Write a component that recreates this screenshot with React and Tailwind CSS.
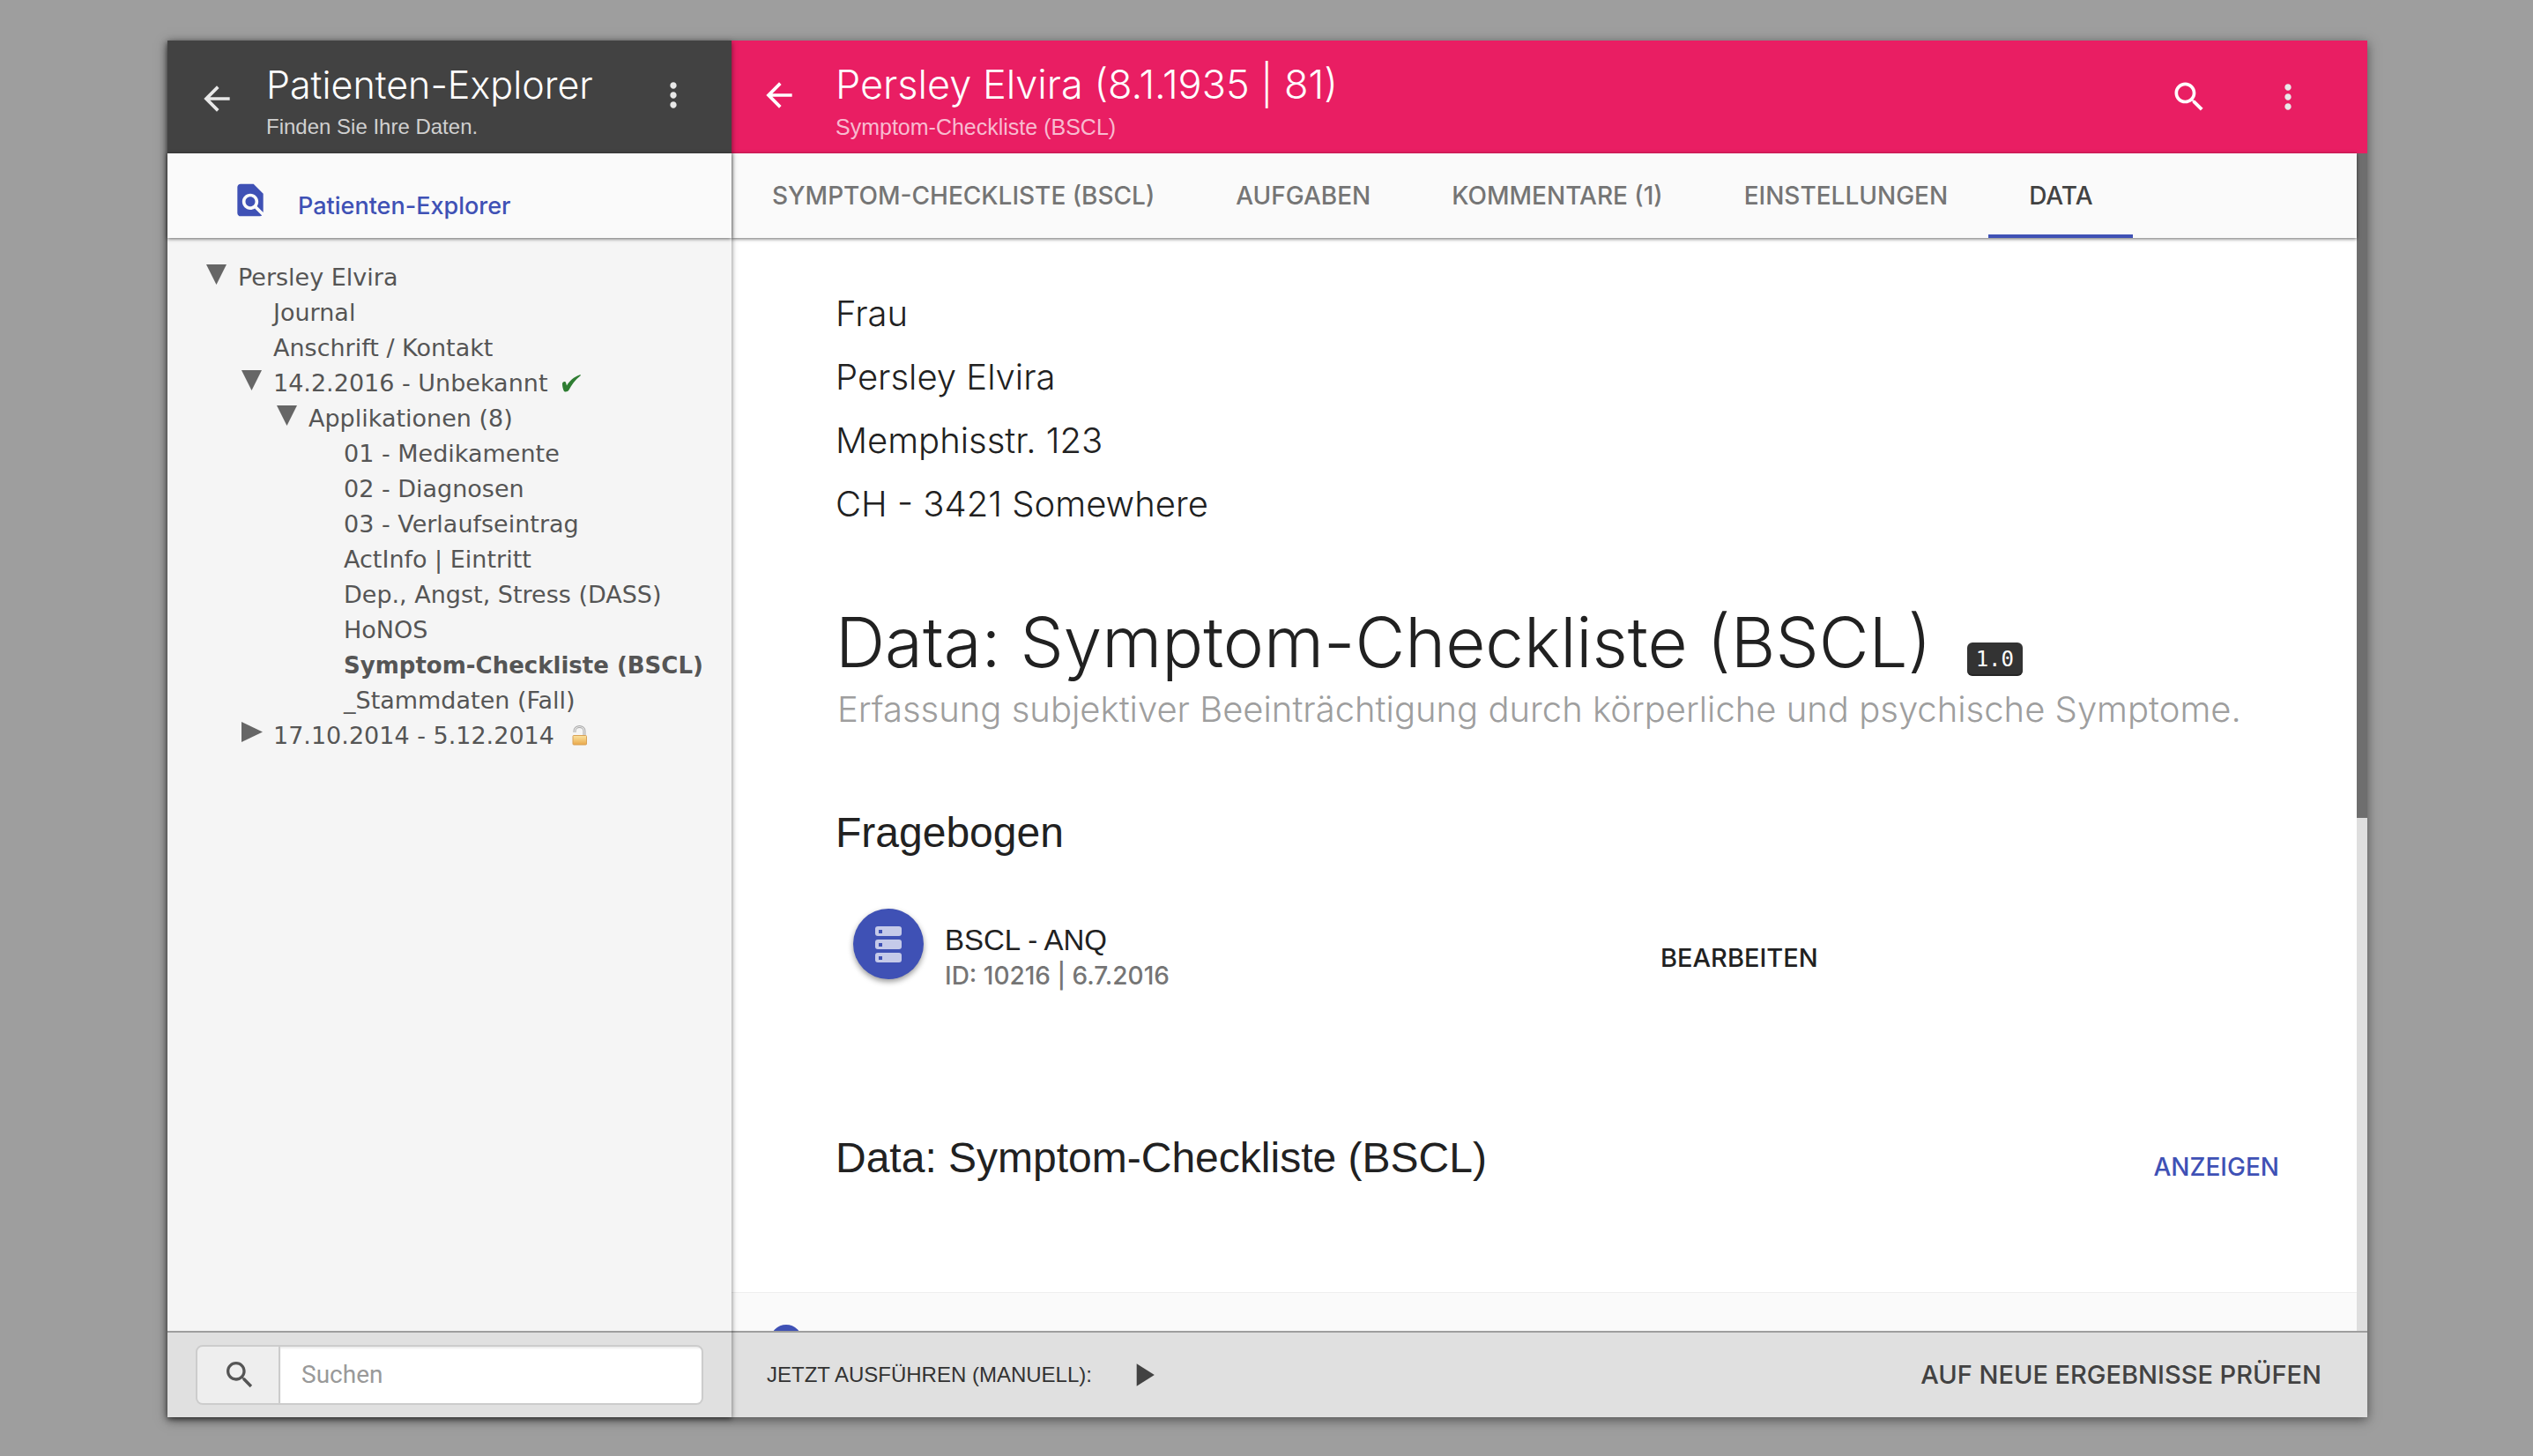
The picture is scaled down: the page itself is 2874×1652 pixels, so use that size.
const PATHS = {
  back: "M20 11H7.83l5.59-5.59L12 4l-8 8 8 8 1.41-1.41L7.83 13H20v-2z",
  more: "M12 8c1.1 0 2-.9 2-2s-.9-2-2-2-2 .9-2 2 .9 2 2 2zm0 2c-1.1 0-2 .9-2 2s.9 2 2 2 2-.9 2-2-.9-2-2-2zm0 6c-1.1 0-2 .9-2 2s.9 2 2 2 2-.9 2-2-.9-2-2-2z",
  search:
    "M15.5 14h-.79l-.28-.27C15.41 12.59 16 11.11 16 9.5 16 5.91 13.09 3 9.5 3S3 5.91 3 9.5 5.91 16 9.5 16c1.61 0 3.09-.59 4.23-1.57l.27.28v.79l5 4.99L20.49 19l-4.99-5zm-6 0C7.01 14 5 11.99 5 9.5S7.01 5 9.5 5 14 7.01 14 9.5 11.99 14 9.5 14z",
  findInPage:
    "M20 19.59V8l-6-6H6c-1.1 0-1.99.9-1.99 2L4 20c0 1.1.89 2 1.99 2H18c.45 0 .85-.15 1.19-.4l-4.43-4.43c-.8.52-1.74.83-2.76.83-2.76 0-5-2.24-5-5s2.24-5 5-5 5 2.24 5 5c0 1.02-.31 1.96-.83 2.75L20 19.59zM9 13c0 1.66 1.34 3 3 3s3-1.34 3-3-1.34-3-3-3-3 1.34-3 3z",
  play: "M8 5v14l11-7z",
};

function Icon({ name, className = "size-11" }) {
  return (
    <svg viewBox="0 0 24 24" fill="currentColor" className={className} aria-hidden="true">
      <path d={PATHS[name]} />
    </svg>
  );
}

function StorageIcon() {
  return (
    <svg viewBox="0 0 30 41" className="h-[41px] w-[30px]" fill="#c5cae9" aria-hidden="true">
      {[0, 15, 30].map((y) => (
        <g key={y}>
          <rect x="0" y={y} width="30" height="11" rx="3" />
          <rect x="4" y={y + 4} width="4" height="4" fill="#3f51b5" />
        </g>
      ))}
    </svg>
  );
}

function CheckMark() {
  return (
    <svg viewBox="0 0 22 20" className="h-5 w-[22px]" fill="#2e7d32" role="img" aria-label="abgeschlossen">
      <path d="M1 10.5C1 8 4.500 7 5.200 9.500L6 12.500C9 7.500 14 2.500 21 0.300C21.800 0 22.200 0.600 21.600 1.200C15.500 6 11.500 11.500 8.500 17.500C7.500 19.500 3.500 20.500 2.500 18C1.700 16 1 13 1 10.500Z" />
    </svg>
  );
}

function LockOpen() {
  return (
    <svg viewBox="0 0 18 23" className="h-[23px] w-[18px]" role="img" aria-label="offen">
      <defs>
        <linearGradient id="brass" x1="0" y1="0" x2="0" y2="1">
          <stop offset="0" stopColor="#fbe3a0" />
          <stop offset="1" stopColor="#e9a84a" />
        </linearGradient>
      </defs>
      <path d="M3 8V6.500A5.500 5 0 0 1 14 6.500V12" fill="none" stroke="#a9a9a9" strokeWidth="3" />
      <path d="M3 8V6.500A5.500 5 0 0 1 14 6.500V12" fill="none" stroke="#e6e6e6" strokeWidth="1.200" />
      <rect x="1" y="11.500" width="15.500" height="10.500" rx="1" fill="url(#brass)" stroke="#d9a257" />
    </svg>
  );
}

const TREE = [
  {
    label: "Persley Elvira",
    open: true,
    children: [
      { label: "Journal" },
      { label: "Anschrift / Kontakt" },
      {
        label: "14.2.2016 - Unbekannt",
        open: true,
        mark: "check",
        children: [
          {
            label: "Applikationen (8)",
            open: true,
            children: [
              { label: "01 - Medikamente" },
              { label: "02 - Diagnosen" },
              { label: "03 - Verlaufseintrag" },
              { label: "ActInfo | Eintritt" },
              { label: "Dep., Angst, Stress (DASS)" },
              { label: "HoNOS" },
              { label: "Symptom-Checkliste (BSCL)", active: true },
              { label: "_Stammdaten (Fall)" },
            ],
          },
        ],
      },
      { label: "17.10.2014 - 5.12.2014", open: false, mark: "lock", children: [] },
    ],
  },
];

function TreeNode({ node }) {
  return (
    <li>
      <div className="flex h-10 items-start">
        {node.children ? (
          <button type="button" aria-expanded={node.open} aria-label={node.label} className="mt-1 size-6 shrink-0">
            <svg viewBox="0 0 24 24" className="size-6" fill="#666" aria-hidden="true">
              <path d={node.open ? "M0 1H23L11.500 24Z" : "M0 0V23L24 11.500Z"} />
            </svg>
          </button>
        ) : (
          <span className="w-6 shrink-0" />
        )}
        <a
          href="#"
          aria-current={node.active ? "page" : undefined}
          className={
            node.active
              ? "ml-3 text-[26px] leading-10 font-bold whitespace-nowrap"
              : "ml-3 text-[27px] leading-10 whitespace-nowrap"
          }
        >
          {node.label}
        </a>
        {node.mark === "check" && (
          <span className="mt-[10px] ml-4">
            <CheckMark />
          </span>
        )}
        {node.mark === "lock" && (
          <span className="mt-2 ml-5">
            <LockOpen />
          </span>
        )}
      </div>
      {node.children?.length > 0 && (
        <ul className="pl-10">
          {node.children.map((c) => (
            <TreeNode key={c.label} node={c} />
          ))}
        </ul>
      )}
    </li>
  );
}

function Sidebar() {
  return (
    <aside className="relative z-10 flex w-[640px] shrink-0 flex-col bg-[#f5f5f5] shadow-[0_2px_6px_rgba(0,0,0,0.55)]">
      <header className="flex h-32 shrink-0 items-start bg-[#424242] pr-11 pl-[34px] text-white">
        <button type="button" aria-label="Zurück" className="mt-11 text-[#e8e8e8]">
          <Icon name="back" />
        </button>
        <div className="mt-[26px] ml-[34px] flex-1 whitespace-nowrap">
          <h1 className="font-['Inter',sans-serif] text-[43px] leading-12 font-light">Patienten-Explorer</h1>
          <p className="text-[24px] leading-12 text-[#d0d0d0]">Finden Sie Ihre Daten.</p>
        </div>
        <button type="button" aria-label="Mehr" className="mt-10 text-[#e8e8e8]">
          <Icon name="more" />
        </button>
      </header>

      <a
        href="#"
        className="relative flex h-24 shrink-0 items-start bg-[#fafafa] pl-[72px] text-[#3f51b5] shadow-[0_1px_4px_rgba(0,0,0,0.6)]"
      >
        <Icon name="findInPage" className="mt-[31px] size-11" />
        <span className="mt-9 ml-8 font-['Inter',sans-serif] text-[27px] leading-12 font-medium">
          Patienten-Explorer
        </span>
      </a>

      <nav
        aria-label="Patient"
        className="min-h-0 flex-1 overflow-hidden pt-[25px] pl-11 font-['DejaVu_Sans',sans-serif] text-[#555]"
      >
        <ul>
          {TREE.map((n) => (
            <TreeNode key={n.label} node={n} />
          ))}
        </ul>
      </nav>

      <form className="shrink-0 border-t-2 border-[#9e9e9e] bg-[#e0e0e0] px-8 py-[14px]">
        <div className="flex h-[68px] overflow-hidden rounded-lg border-2 border-[#ccc]">
          <label
            htmlFor="suche"
            aria-label="Suchen"
            className="flex w-[94px] items-center justify-center border-r-2 border-[#ccc] bg-[#eee] pl-1 text-[#555]"
          >
            <Icon name="search" className="size-10" />
          </label>
          <input
            id="suche"
            type="search"
            placeholder="Suchen"
            className="min-w-0 flex-1 bg-white px-6 font-['Roboto',sans-serif] text-[28px] shadow-[inset_0_2px_2px_rgba(0,0,0,0.08)] outline-none placeholder:text-[#999]"
          />
        </div>
      </form>
    </aside>
  );
}

const TABS = ["SYMPTOM-CHECKLISTE (BSCL)", "AUFGABEN", "KOMMENTARE (1)", "EINSTELLUNGEN", "DATA"];

function Tabs() {
  return (
    <div
      role="tablist"
      className="relative flex h-24 shrink-0 bg-[#fafafa] font-['Inter',sans-serif] text-[28px] font-medium shadow-[0_1px_4px_rgba(0,0,0,0.6)]"
    >
      {TABS.map((t) => (
        <button
          key={t}
          type="button"
          role="tab"
          aria-selected={t === "DATA"}
          className={
            t === "DATA"
              ? "border-y-4 border-t-transparent border-b-[#3f51b5] px-[46px] text-[#424242]"
              : "border-y-4 border-transparent px-[46px] text-[#757575]"
          }
        >
          {t}
        </button>
      ))}
    </div>
  );
}

function Content() {
  return (
    <main className="flex min-h-0 flex-1 flex-col overflow-hidden bg-white pt-[50px] text-[#212121]">
      <div className="pr-[88px] pl-[118px]">
        <address className="font-['Inter',sans-serif] text-[40px] leading-[72px] font-light not-italic">
          <p>Frau</p>
          <p>Persley Elvira</p>
          <p>Memphisstr. 123</p>
          <p>CH - 3421 Somewhere</p>
        </address>

        <div className="mt-[77px] flex items-start whitespace-nowrap">
          <h2 className="font-['Inter',sans-serif] text-[78px] leading-[88px] font-light">
            Data: Symptom-Checkliste (BSCL)
          </h2>
          <kbd className="mt-11 ml-10 rounded-md bg-[#333] px-[10px] font-['DejaVu_Sans_Mono',monospace] text-[24px] leading-[38px] text-white shadow-[inset_0_-2px_0_rgba(0,0,0,0.25)]">
            1.0
          </kbd>
        </div>
        <p className="mt-2 pl-[2px] font-['Inter',sans-serif] text-[40px] leading-12 font-light whitespace-nowrap text-[#9e9e9e]">
          Erfassung subjektiver Beeinträchtigung durch körperliche und psychische Symptome.
        </p>

        <h3 className="mt-[88px] text-[48px] leading-14">Fragebogen</h3>
        <div className="mt-[58px] flex items-start">
          <div className="flex w-4/7 items-start pl-5">
            <span className="flex size-20 items-center justify-center rounded-full bg-[#3f51b5] shadow-[0_3px_6px_rgba(0,0,0,0.4)]">
              <StorageIcon />
            </span>
            <div className="mt-4 ml-6">
              <p className="text-[33px] leading-10">BSCL - ANQ</p>
              <p className="font-['Inter',sans-serif] text-[28px] leading-10 font-medium text-[#757575]">
                ID: 10216 | 6.7.2016
              </p>
            </div>
          </div>
          <button type="button" className="mt-9 font-['Inter',sans-serif] text-[29px] leading-10 font-medium">
            BEARBEITEN
          </button>
        </div>

        <div className="mt-[159px] flex items-start justify-between">
          <h3 className="text-[48px] leading-14">Data: Symptom-Checkliste (BSCL)</h3>
          <button
            type="button"
            className="mt-[18px] font-['Inter',sans-serif] text-[28px] leading-10 font-medium text-[#3f51b5]"
          >
            ANZEIGEN
          </button>
        </div>
      </div>

      <section className="mt-[122px] flex-1 border-t border-[#eee] bg-[#fafafa] pt-9 pl-11">
        <span className="block size-9 rounded-full bg-[#3f51b5]" />
      </section>
    </main>
  );
}

export default function App() {
  return (
    <div className="flex h-screen bg-[#9e9e9e] pt-[46px] pr-[188px] pb-11 pl-[190px] font-['Liberation_Sans',Arial,sans-serif]">
      <div className="flex min-w-0 flex-1 shadow-[0_3px_12px_rgba(0,0,0,0.5)]">
        <Sidebar />
        <div className="flex min-w-0 flex-1 flex-col">
          <header className="flex h-32 shrink-0 items-start bg-[#e91e63] pr-[68px] pl-8 text-white">
            <button type="button" aria-label="Zurück" className="mt-10">
              <Icon name="back" />
            </button>
            <div className="mt-[26px] ml-[42px] flex-1 whitespace-nowrap">
              <h1 className="font-['Inter',sans-serif] text-[45px] leading-12 font-light">
                Persley Elvira (8.1.1935 | 81)
              </h1>
              <p className="text-[25px] leading-12 text-[#f8bbd0]">Symptom-Checkliste (BSCL)</p>
            </div>
            <button type="button" aria-label="Suchen" className="mt-[42px]">
              <Icon name="search" />
            </button>
            <button type="button" aria-label="Mehr" className="mt-[42px] ml-[68px] text-[#e8e8e8]">
              <Icon name="more" />
            </button>
          </header>

          <div className="flex min-h-0 flex-1">
            <div className="flex min-w-0 flex-1 flex-col">
              <Tabs />
              <Content />
            </div>
            <div className="w-3 shrink-0 bg-[#dedede]">
              <div className="h-[56.4%] bg-[#6e6e6e]" />
            </div>
          </div>

          <footer className="flex h-[98px] shrink-0 items-center border-t-2 border-[#9e9e9e] bg-[#e0e0e0] pr-[52px] pl-10">
            <span className="text-[24px] text-[#333]">JETZT AUSFÜHREN (MANUELL):</span>
            <button type="button" aria-label="Jetzt ausführen" className="ml-9 text-[#424242]">
              <Icon name="play" />
            </button>
            <button
              type="button"
              className="ml-auto font-['Inter',sans-serif] text-[29px] leading-10 font-medium text-[#424242]"
            >
              AUF NEUE ERGEBNISSE PRÜFEN
            </button>
          </footer>
        </div>
      </div>
    </div>
  );
}
